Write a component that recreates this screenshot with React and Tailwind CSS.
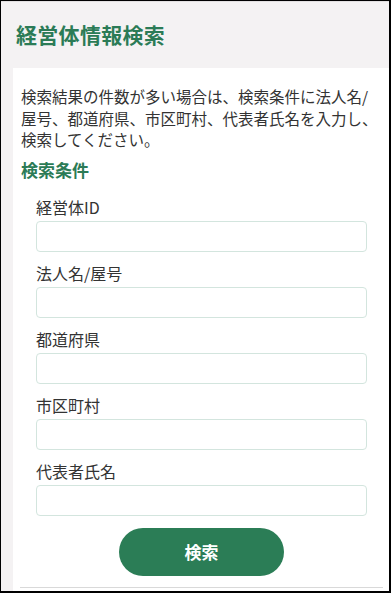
export default function App() {
  const fields = ["経営体ID", "法人名/屋号", "都道府県", "市区町村", "代表者氏名"];

  return (
    <div
      className="w-[391px] h-[593px] overflow-hidden box-border border-l border-t border-r-2 border-b-2 border-black bg-[#f4f2f3] flex flex-col text-[#333]"
      style={{ fontFamily: '"Noto Sans CJK JP", "Noto Sans", sans-serif' }}
    >
      <div className="h-[67px] shrink-0 border-t border-[#e2e0e1] flex items-center px-[15px]">
        <h1 className="text-[21px] font-bold text-[#2b7b56] tracking-[0.3px]">経営体情報検索</h1>
      </div>

      <div className="ml-[12px] flex-1 bg-white flex flex-col">
        <p className="px-[8px] pt-[18px] text-[15.5px] leading-[21.5px]">
          検索結果の件数が多い場合は、検索条件に法人名/屋号、都道府県、市区町村、代表者氏名を入力し、検索してください。
        </p>
        <h2 className="px-[8px] mt-[7px] text-[17px] leading-[24px] font-bold text-[#2b7b56]">検索条件</h2>

        <form className="pl-[23px] pr-[22px] mt-[13px] flex flex-col">
          {fields.map((label) => (
            <div key={label} className="mb-[9px]">
              <label className="block text-[16px] leading-[24px]">{label}</label>
              <input
                type="text"
                className="mt-[2px] block w-full h-[31px] border border-[#d3e5de] rounded-[4px] px-2 outline-none"
              />
            </div>
          ))}
          <div className="flex justify-center mt-[3px]">
            <button
              type="button"
              className="w-[165px] h-[48px] rounded-full bg-[#2b7d56] text-white text-[17px] font-bold"
            >
              検索
            </button>
          </div>
        </form>

        <div className="mt-[11px] ml-[7px] mr-[6px] h-px shrink-0 bg-[#d9d9d9]"></div>
      </div>
    </div>
  );
}
